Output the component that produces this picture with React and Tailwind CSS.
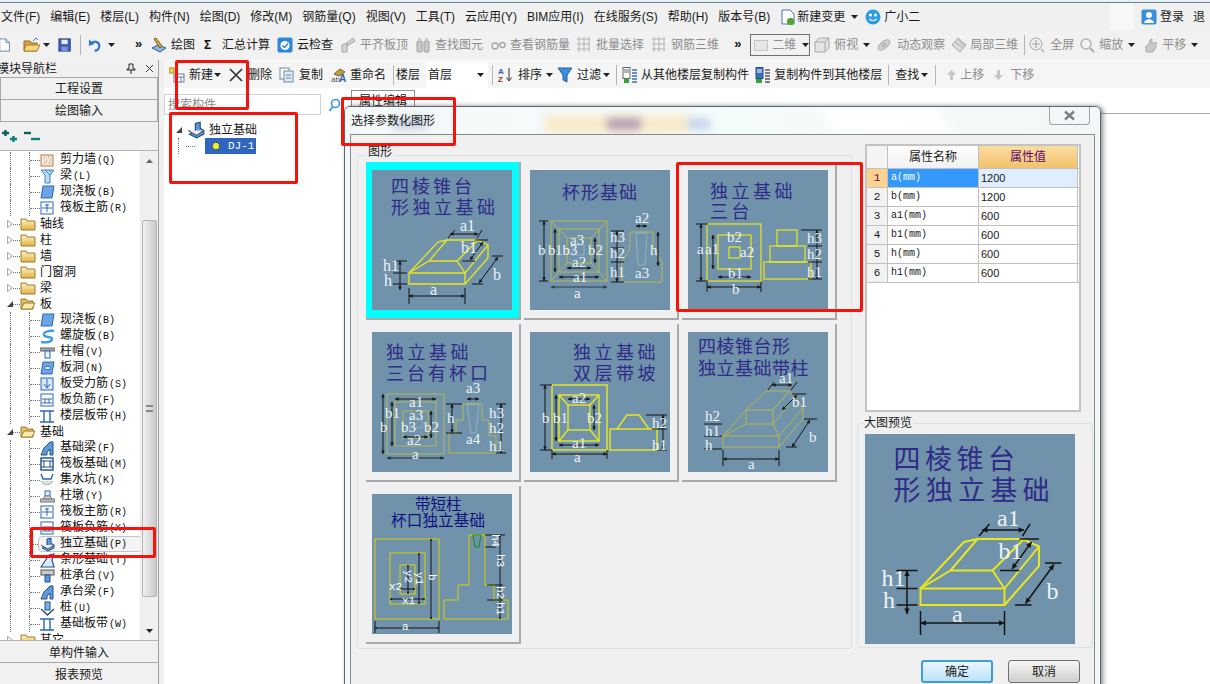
import React from "react";

const Y = "#e8e81c", O = "#b5b84e", K = "#141414", W = "#eef3f6";

function Dim({ x1, y1, x2, y2, c = K, s = 3.6 }) {
  const d = Math.hypot(x2 - x1, y2 - y1) || 1;
  const ux = (x2 - x1) / d, uy = (y2 - y1) / d, nx = -uy, ny = ux;
  const tri = (x, y, dir) => `${x},${y} ${x + dir * ux * s + nx * s * 0.5},${y + dir * uy * s + ny * s * 0.5} ${x + dir * ux * s - nx * s * 0.5},${y + dir * uy * s - ny * s * 0.5}`;
  return (
    <g>
      <line x1={x1} y1={y1} x2={x2} y2={y2} stroke={c} strokeWidth="1" />
      <polygon points={tri(x1, y1, 1)} fill={c} />
      <polygon points={tri(x2, y2, -1)} fill={c} />
    </g>
  );
}
const L = ({ p, c = K, w = 1 }) => <polyline points={p} fill="none" stroke={c} strokeWidth={w} />;
const T = ({ x, y, s = 15, children }) => (
  <text x={x} y={y} fontSize={s} fill={W} fontFamily="'Liberation Serif', serif">{children}</text>
);
const H = ({ x, y, s = 18, ls = 3, c = "#2f2b88", children }) => (
  <text x={x} y={y} fontSize={s} letterSpacing={ls} fill={c} fontFamily="'Noto Sans CJK SC', sans-serif">{children}</text>
);
const Thumb = ({ size = 140, children }) => (
  <svg viewBox="0 0 140 140" width={size} height={size} className="block shrink-0 bg-[#7092aa]">{children}</svg>
);

function D1() {
  const c = Y, w = 1.3;
  return (
    <>
      <H x={19} y={23}>四棱锥台</H>
      <H x={19} y={44} ls={3.5}>形独立基础</H>
      <L c={c} w={w} p="37,103 93,103 93,114 37,114 37,103 66,72 75,70 105,70 116,75 116,88 93,114" />
      <L c={c} w={w} p="93,103 116,75" />
      <L c={c} w={w} p="37,103 57,91 85,91 93,103" />
      <L c={c} w={w} p="57,91 75,70" />
      <L c={c} w={w} p="85,91 106,70" />
      <L p="37,118 37,134" /><L p="93,118 93,134" />
      <Dim x1={37} y1={126} x2={93} y2={126} />
      <L p="21,91 35,91" /><L p="21,103 35,103" /><L p="21,114 35,114" />
      <Dim x1={28} y1={91} x2={28} y2={120} />
      <L p="76,68 83,60" /><L p="105,68 110,60" />
      <Dim x1={78} y1={64} x2={106} y2={64} />
      <L p="103,70 116,70" /><L p="90,91 103,91" />
      <Dim x1={111} y1={72} x2={98} y2={90} />
      <L p="120,86 131,86" /><L p="100,114 111,114" />
      <Dim x1={126} y1={87} x2={107} y2={113} />
      <T x={58} y={125} s={16}>a</T>
      <T x={11} y={101} s={16}>h1</T>
      <T x={12} y={116} s={16}>h</T>
      <T x={88} y={61} s={16}>a1</T>
      <T x={89} y={83} s={16}>b1</T>
      <T x={121} y={110} s={16}>b</T>
    </>
  );
}
function D2() {
  const c = O;
  return (
    <>
      <H x={32} y={29} ls={1}>杯形基础</H>
      <rect x={21} y={51} width={56} height={60} fill="none" stroke={c} />
      <rect x={29} y={59} width={40} height={43} fill="none" stroke={c} />
      <rect x={37} y={68} width={24} height={25} fill="none" stroke={c} />
      <rect x={43} y={75} width={11} height={10} fill="none" stroke="#a9c7c9" strokeWidth="0.6" />
      <L c={c} p="21,51 37,68" /><L c={c} p="77,51 61,68" /><L c={c} p="21,111 37,93" /><L c={c} p="77,111 61,93" />
      <polygon points="100,62 123,62 123,78 132,92 132,112 92,112 92,92 100,78" fill="none" stroke={c} />
      <polygon points="106,63 117,63 115,95 108,95" fill="none" stroke="#a9c7c9" strokeWidth="0.6" />
      <Dim x1={14} y1={51} x2={14} y2={111} /><L p="9,51 18,51" /><L p="9,111 18,111" />
      <Dim x1={25} y1={59} x2={25} y2={102} />
      <Dim x1={21} y1={117} x2={77} y2={117} c="#2c3c48" />
      <Dim x1={29} y1={107} x2={69} y2={107} />
      <Dim x1={37} y1={98} x2={61} y2={98} />
      <Dim x1={65} y1={68} x2={65} y2={93} />
      <Dim x1={87} y1={61} x2={87} y2={112} /><L p="81,61 94,61" /><L p="81,78 94,78" /><L p="81,92 94,92" /><L p="81,112 94,112" />
      <Dim x1={128} y1={62} x2={128} y2={96} />
      <Dim x1={106} y1={56} x2={117} y2={56} />
      <T x={8} y={85}>b</T><T x={18} y={85}>b</T><T x={25} y={85}>1b3</T><T x={58} y={85}>b2</T>
      <T x={40} y={75}>a3</T><T x={42} y={97}>a2</T><T x={43} y={112}>a1</T><T x={44} y={128}>a</T>
      <T x={80} y={72}>h3</T><T x={80} y={88}>h2</T><T x={80} y={107}>h1</T><T x={120} y={85}>h</T>
      <T x={105} y={53}>a2</T><T x={105} y={108}>a3</T>
    </>
  );
}
function D3() {
  const c = Y;
  return (
    <>
      <H x={22} y={28} ls={3.5}>独立基础</H>
      <H x={22} y={48} ls={3.5}>三台</H>
      {[[19, 54, 54, 57], [30, 65, 33, 34], [41, 77, 11, 11], [76, 92, 47, 17], [82, 76, 35, 16], [89, 60, 20, 16]].map((r, i) => (
        <rect key={i} x={r[0]} y={r[1]} width={r[2]} height={r[3]} fill="none" stroke={c} strokeWidth="1.2" />
      ))}
      <Dim x1={13} y1={54} x2={13} y2={111} /><L p="8,54 20,54" /><L p="8,111 20,111" />
      <Dim x1={25} y1={65} x2={25} y2={99} />
      <Dim x1={30} y1={107} x2={63} y2={107} />
      <Dim x1={19} y1={117} x2={73} y2={117} /><L p="19,112 19,122" /><L p="73,112 73,122" />
      <Dim x1={129} y1={60} x2={129} y2={109} />
      <L p="113,60 134,60" /><L p="120,76 134,76" /><L p="120,92 134,92" /><L p="120,109 134,109" />
      <T x={9} y={84}>a</T><T x={17} y={84}>a1</T><T x={39} y={72}>b2</T><T x={52} y={87}>a2</T>
      <T x={40} y={108}>b1</T><T x={44} y={124}>b</T>
      <T x={119} y={73}>h3</T><T x={119} y={89}>h2</T><T x={119} y={107}>h1</T>
    </>
  );
}
function D4() {
  const c = O;
  return (
    <>
      <H x={14} y={27} ls={3.5}>独立基础</H>
      <H x={14} y={48} ls={3}>三台有杯口</H>
      {[[15, 62, 57, 60], [23, 70, 41, 44], [31, 79, 25, 27]].map((r, i) => (
        <rect key={i} x={r[0]} y={r[1]} width={r[2]} height={r[3]} fill="none" stroke={c} />
      ))}
      <rect x={38} y={86} width={12} height={10} fill="none" stroke="#a9c7c9" strokeWidth="0.6" />
      <polygon points="91,72 110,72 110,88 117,88 117,104 124,104 124,121 77,121 77,101 84,101 84,88 91,88" fill="none" stroke={c} />
      <polygon points="95,72 107,72 104,101 99,101" fill="none" stroke="#a9c7c9" strokeWidth="0.6" />
      <Dim x1={15} y1={126} x2={72} y2={126} c="#1c2a34" /><Dim x1={11} y1={62} x2={11} y2={122} />
      <Dim x1={20} y1={70} x2={20} y2={114} /><Dim x1={23} y1={67} x2={64} y2={67} />
      <Dim x1={59} y1={79} x2={59} y2={106} /><Dim x1={31} y1={105} x2={56} y2={105} />
      <Dim x1={95} y1={67} x2={107} y2={67} /><Dim x1={80} y1={72} x2={80} y2={101} />
      <L p="74,72 90,72" /><L p="74,101 90,101" />
      <Dim x1={129} y1={72} x2={129} y2={121} /><L p="124,72 134,72" /><L p="124,121 134,121" />
      <T x={8} y={100}>b</T><T x={13} y={86}>b1</T><T x={37} y={75}>a1</T><T x={37} y={88}>a3</T>
      <T x={29} y={100}>b3</T><T x={52} y={100}>b2</T><T x={35} y={113}>a2</T><T x={40} y={127}>a</T>
      <T x={94} y={61}>a3</T><T x={75} y={91}>h</T><T x={94} y={112}>a4</T>
      <T x={117} y={86}>h3</T><T x={117} y={101}>h2</T><T x={117} y={119}>h1</T>
    </>
  );
}
function D5() {
  const c = Y, w = 1.4;
  return (
    <>
      <H x={43} y={27} ls={3.5}>独立基础</H>
      <H x={43} y={48} ls={3.5}>双层带坡</H>
      {[[22, 53, 55, 65], [29, 63, 40, 46], [38, 73, 22, 25], [80, 97, 47, 21]].map((r, i) => (
        <rect key={i} x={r[0]} y={r[1]} width={r[2]} height={r[3]} fill="none" stroke={c} strokeWidth={w} />
      ))}
      <L c={c} w={w} p="29,63 38,73" /><L c={c} w={w} p="69,63 60,73" /><L c={c} w={w} p="29,109 38,98" /><L c={c} w={w} p="69,109 60,98" />
      <L c={c} w={w} p="87,97 97,83 109,83 119,97" />
      <Dim x1={22} y1={122} x2={77} y2={122} /><L p="22,118 22,127" /><L p="77,118 77,127" />
      <Dim x1={15} y1={53} x2={15} y2={118} /><L p="10,53 22,53" /><L p="10,118 22,118" />
      <Dim x1={26} y1={63} x2={26} y2={109} /><Dim x1={38} y1={67} x2={60} y2={67} />
      <Dim x1={64} y1={73} x2={64} y2={98} /><Dim x1={29} y1={113} x2={69} y2={113} />
      <Dim x1={133} y1={83} x2={133} y2={118} /><L p="116,83 137,83" /><L p="122,97 137,97" /><L p="127,118 137,118" />
      <T x={44} y={130}>a</T><T x={12} y={91}>b</T><T x={23} y={91}>b1</T><T x={42} y={71}>a2</T>
      <T x={57} y={91}>b2</T><T x={42} y={116}>a1</T><T x={122} y={96}>h2</T><T x={122} y={118}>h1</T>
    </>
  );
}
function D6() {
  const c = O;
  return (
    <>
      <H x={10} y={21} ls={0.5}>四棱锥台形</H>
      <H x={10} y={43} ls={0.5}>独立基础带柱</H>
      <rect x={35} y={104} width={56} height={11} fill="none" stroke={c} />
      <rect x={58} y={78} width={27} height={14} fill="none" stroke={c} />
      <L c={c} p="91,115 115,87 115,76 91,104" />
      <L c={c} p="35,104 58,92" /><L c={c} p="85,92 91,104" />
      <L c={c} p="35,104 58,78 78,59 101,59 85,78" />
      <L c={c} p="101,59 115,76" /><L c={c} p="85,92 101,72" />
      <Dim x1={35} y1={127} x2={91} y2={127} /><L p="35,118 35,134" /><L p="91,118 91,134" />
      <Dim x1={122} y1={88} x2={104} y2={115} /><L p="116,87 129,87" /><L p="98,115 109,115" />
      <Dim x1={84} y1={53} x2={104} y2={53} /><L p="80,58 86,50" /><L p="103,58 109,50" />
      <Dim x1={109} y1={63} x2={94} y2={78} /><L p="104,62 118,62" />
      <L p="16,92 34,92" /><L p="16,104 34,104" /><L p="16,117 34,117" />
      <T x={17} y={89}>h2</T><T x={17} y={104}>h1</T><T x={17} y={118}>h</T>
      <T x={60} y={137}>a</T><T x={121} y={110}>b</T><T x={91} y={51}>a1</T><T x={104} y={75}>b1</T>
    </>
  );
}
function D7() {
  const c = "#d8d000";
  const R = ({ x, y, children }) => (
    <text x={x} y={y} fontSize={11} fill="#fff" fontFamily="'Liberation Mono', monospace" transform={`rotate(90 ${x} ${y})`}>{children}</text>
  );
  return (
    <>
      <H x={43} y={16} s={15.5} ls={0} c="#10107f">带短柱</H>
      <H x={19} y={32} s={15.5} ls={0.2} c="#10107f">杯口独立基础</H>
      {[[3, 45, 64, 80], [18, 59, 35, 51], [28, 71, 15, 29]].map((r, i) => (
        <rect key={i} x={r[0]} y={r[1]} width={r[2]} height={r[3]} fill="none" stroke={c} />
      ))}
      <polygon points="97,41 113,41 113,91 122,91 122,106 136,106 136,125 72,125 72,106 86,106 86,91 97,91" fill="none" stroke={c} />
      <polygon points="101,41 109,41 107,53 103,53" fill="none" stroke="#0b8f10" />
      <Dim x1={3} y1={134} x2={67} y2={134} s={2} /><L p="3,127 3,139" /><L p="67,127 67,139" />
      <Dim x1={59} y1={45} x2={59} y2={125} s={2} />
      <Dim x1={47} y1={59} x2={47} y2={110} s={2} />
      <Dim x1={36} y1={71} x2={36} y2={100} s={2} />
      <Dim x1={18} y1={105} x2={53} y2={105} s={2} />
      <Dim x1={28} y1={95} x2={43} y2={95} s={2} />
      <Dim x1={128} y1={41} x2={128} y2={125} s={2} />
      <L p="113,41 133,41" /><L p="113,53 124,53" /><L p="115,91 131,91" /><L p="115,106 131,106" />
      <text x={30} y={136} fontSize={11} fill="#fff" fontFamily="'Liberation Mono', monospace">a</text>
      <text x={17} y={96} fontSize={11} fill="#fff" fontFamily="'Liberation Mono', monospace">x2</text>
      <text x={30} y={110} fontSize={11} fill="#fff" fontFamily="'Liberation Mono', monospace">x1</text>
      <R x={57} y={80}>b</R><R x={44} y={78}>y1</R><R x={33} y={76}>y2</R>
      <R x={120} y={40}>h4</R><R x={125} y={60}>h3</R><R x={125} y={92}>h2</R><R x={125} y={108}>h1</R>
    </>
  );
}

const S = ({ w = 16, h = 16, v = "0 0 16 16", children }) => (
  <svg width={w} height={h} viewBox={v} className="block shrink-0">{children}</svg>
);
const Caret = () => (
  <svg width="7" height="4" viewBox="0 0 7 4" className="block shrink-0"><polygon points="0,0 7,0 3.5,4" fill="#222" /></svg>
);
const Sep = () => <div className="h-5 w-px shrink-0 bg-[#b5b5b5]" />;
const More = () => <div className="-mt-1 w-2 shrink-0 text-[13px] leading-none font-bold text-[#111]">»</div>;
const IDoc = () => <S w={14}><path d="M2 1h7l4 4v10H2z" fill="#fff" stroke="#5a7da0" /><path d="M9 1v4h4" fill="#dbe7f3" stroke="#5a7da0" /></S>;
const IFold = () => <S w={18}><path d="M1 4h6l1 2h6v8H1z" fill="#d9a13a" stroke="#8f6a20" /><path d="M3 8h14l-3 6H1z" fill="#f6d77f" stroke="#a8802c" /><path d="M10 4l3-3 2 2" fill="none" stroke="#3a79c9" /></S>;
const ISave = () => <S w={14}><rect x="1" y="1" width="13" height="14" fill="#3f5fb5" stroke="#263f86" /><rect x="4" y="2" width="7" height="5" fill="#e9eefb" /><rect x="4" y="10" width="7" height="5" fill="#7b93d5" /></S>;
const IUndo = () => <S w={15}><path d="M3 7c3-4 9-3 9 2 0 3-2 5-5 5" fill="none" stroke="#2f78d0" strokeWidth="2.4" /><polygon points="1,2 7,7 1,9" fill="#2f78d0" /></S>;
const IDraw = () => <S><path d="M1 11l6-3 8 3-6 4z" fill="#8fb7df" stroke="#2c5b94" /><path d="M3 2l2-1 6 8-2 2z" fill="#e2b13c" stroke="#74581a" /></S>;
const ICloud = () => <S><rect x="0.5" y="0.5" width="15" height="15" rx="2" fill="#2e86d8" /><circle cx="8" cy="8.5" r="4.6" fill="#fff" /><path d="M5.5 8.5l2 2 3.5-4" fill="none" stroke="#2e86d8" strokeWidth="1.4" /></S>;
const IG1 = () => <S><path d="M2 15V8l5-2v9zM7 6l6-5 2 3-8 5z" fill="#d5d5d5" stroke="#a5a5a5" /></S>;
const IBino = () => <S><rect x="2" y="4" width="5" height="11" rx="1" fill="#c9c9c9" stroke="#a0a0a0" /><rect x="9" y="4" width="5" height="11" rx="1" fill="#c9c9c9" stroke="#a0a0a0" /><rect x="3" y="1" width="3" height="3" fill="#ccc" /><rect x="10" y="1" width="3" height="3" fill="#ccc" /></S>;
const IGlass = () => <S><circle cx="4" cy="9" r="3" fill="none" stroke="#a8a8a8" strokeWidth="1.4" /><path d="M7 9c1-2 2-4 3-3" fill="none" stroke="#a8a8a8" /><circle cx="11.5" cy="8" r="2.5" fill="none" stroke="#a8a8a8" strokeWidth="1.4" /></S>;
const IGrid = () => <S><path d="M1 2h13M1 7h13M1 12h13M3 0v15M8 0v15M13 0v15" stroke="#b4b4b4" fill="none" /></S>;
const IBox = () => <S><path d="M1 5l4-4h10v10l-4 4H1z" fill="#e3e3e3" stroke="#a8a8a8" /><path d="M1 5h10v10M11 5l4-4" fill="none" stroke="#a8a8a8" /></S>;
const IOrbit = () => <S w={16} h={16} v="0 0 18 18"><ellipse cx="9" cy="9" rx="8" ry="4" transform="rotate(-40 9 9)" fill="#d0d0d0" stroke="#aaa" /><circle cx="9" cy="9" r="3" fill="#bdbdbd" /></S>;
const ILocal = () => <S><path d="M1 8l6-7 8 7-6 7z" fill="#dcdcdc" stroke="#a8a8a8" /><path d="M4 5l8 6M7 3l7 6" stroke="#aaa" fill="none" /></S>;
const IZoomFit = () => <S><circle cx="7" cy="7" r="6" fill="#efefef" stroke="#a8a8a8" /><path d="M7 3v8M3 7h8M12 12l3 3" stroke="#a8a8a8" fill="none" strokeWidth="1.2" /></S>;
const IZoom = () => <S><circle cx="6" cy="7" r="5" fill="#f3f3f3" stroke="#b0b0b0" strokeWidth="1.4" /><path d="M10 11l4 4" stroke="#aaa" strokeWidth="2" /></S>;
const IHand = () => <S><path d="M3 15V9l3-2 1-4 2-1v5l4-2v5l-3 5z" fill="#c9c9c9" stroke="#aaa" /></S>;
const INew = () => <S><rect x="0" y="1" width="5" height="5" fill="#f3cf4e" stroke="#b08a20" /><rect x="5" y="7" width="10" height="8" fill="#fff" stroke="#5d7fa5" /><path d="M5 10h10M8 10v5M12 10v5" stroke="#5d7fa5" fill="none" /></S>;
const ICopy = () => <S><rect x="1" y="1" width="9" height="11" fill="#fff" stroke="#6d89a8" /><rect x="5" y="4" width="9" height="11" fill="#dfe9f4" stroke="#6d89a8" /><path d="M7 8h5M7 11h5" stroke="#6d89a8" /></S>;
const IRename = () => <S><path d="M3 7l6-5 5 3-6 4z" fill="#c9a23a" stroke="#75601c" /><text x="0" y="15" fontSize="8" fill="#555" fontFamily="'Liberation Sans', sans-serif">ab</text><text x="8" y="15" fontSize="10" fontWeight="700" fill="#2a62b0" fontFamily="'Liberation Sans', sans-serif">A</text></S>;
const ISort = () => <S><text x="1" y="7" fontSize="8" fontWeight="700" fill="#2a62b0" fontFamily="'Liberation Sans', sans-serif">A</text><text x="1" y="15" fontSize="8" fontWeight="700" fill="#a03030" fontFamily="'Liberation Sans', sans-serif">Z</text><path d="M12 1v12M9.5 10.5l2.5 3.5 2.5-3.5" stroke="#333" fill="none" /></S>;
const IFunnel = () => <S><polygon points="1,1 15,1 10,8 10,15 6,13 6,8" fill="#3d8fe0" stroke="#235f9f" /></S>;
const ICopyFrom = () => <S><rect x="1" y="0.5" width="7" height="11" fill="#fff" stroke="#666" /><path d="M2 3h5M2 5h5" stroke="#666" /><rect x="2" y="12" width="5" height="4" fill="#35a336" /><path d="M10 3h5M10 6h5M10 9h5M10 12h5M10 15h5" stroke="#3a70b8" strokeWidth="1.4" /></S>;
const ICopyTo = () => <S><rect x="1" y="0.5" width="7" height="11" fill="#3a70b8" stroke="#2a4f86" /><path d="M2 3h5M2 5h5" stroke="#fff" /><rect x="1" y="12" width="6" height="4" fill="#35a336" /><path d="M10 3h5M10 6h5M10 9h5M10 12h5M10 15h5" stroke="#555" strokeWidth="1.4" /></S>;
const IUp = () => <S w={9} h={12} v="0 0 9 12"><polygon points="4.5,1 9,6 6,6 6,11 3,11 3,6 0,6" fill="#c6c6c6" /></S>;
const IDown = () => <S w={9} h={12} v="0 0 9 12"><polygon points="4.5,11 9,6 6,6 6,1 3,1 3,6 0,6" fill="#c6c6c6" /></S>;

const Blue = "#2a66b8";
const TI = {
  wall: <><rect x="1" y="2" width="12" height="11" fill="#f2e4d6" stroke="#c9743a" /><path d="M4 5h1M8 4h1M6 8h1M10 7h1M4 10h1M9 10h1" stroke="#888" /></>,
  beamL: <><path d="M1 1h13l-4 5v8H5V6z" fill="#bcdcf4" stroke="#3a82c4" /><path d="M5 1l5 5M9 1l3 3" stroke="#3a82c4" /></>,
  slab: <path d="M3 1h11l-2 12H1z" fill="#6aa4e4" stroke={Blue} />,
  net: <><rect x="1" y="1" width="12" height="12" fill="#fff" stroke={Blue} /><path d="M2 7h10M7 3v8M5 4h4" stroke={Blue} /></>,
  netC: <><rect x="1" y="1" width="12" height="12" fill="#d8e7f8" stroke={Blue} /><path d="M7 2v9M4 7l3 4 3-4" stroke={Blue} fill="none" /></>,
  grid: <><rect x="1" y="1" width="12" height="12" fill="#fff" stroke={Blue} /><path d="M2 6h10M2 10h10M5 6v4M9 6v4" stroke={Blue} /></>,
  spiral: <path d="M14 2C9 1 3 3 4 6c1 3 8 1 8 4s-6 4-11 3" fill="none" stroke="#3f9ce0" strokeWidth="2.4" />,
  cap: <><rect x="0" y="3" width="15" height="3" fill="#a8a8a8" stroke="#666" /><rect x="5" y="6" width="5" height="7" fill="#e8f0fa" stroke={Blue} /></>,
  hole: <><path d="M3 1h11l-2 12H1z" fill="#6aa4e4" stroke={Blue} /><ellipse cx="7.5" cy="7" rx="3" ry="1.6" fill="#fff" stroke={Blue} /></>,
  band: <><path d="M0 2h14M0 13h14M4 2v11M10 2v11" stroke={Blue} strokeWidth="1.4" /></>,
  beam: <><path d="M1 14l3-7 6-6h3v13h-3V8l-3 3v3z" fill="#5f9bd9" stroke="#234f8a" /></>,
  raft: <><rect x="1" y="1" width="12" height="12" fill="#fff" stroke="#1d4d8f" strokeWidth="1.4" /><rect x="4" y="4" width="6" height="6" fill="none" stroke="#1d4d8f" /><path d="M1 4h3M10 4h3M1 10h3M10 10h3" stroke="#1d4d8f" /></>,
  pit: <><path d="M1 1l2 5h8l2-5" fill="none" stroke={Blue} strokeWidth="1.4" /><path d="M1 8c2 5 10 5 12 0" fill="#ddd" stroke="#777" strokeDasharray="1 1" /></>,
  pier: <><rect x="5" y="2" width="5" height="5" fill="#e8f0fa" stroke={Blue} /><path d="M3 10l2-3h5l2 3z" fill="#ddd" stroke="#777" /><rect x="0" y="10" width="15" height="3" fill="#bbb" stroke="#777" /></>,
  foot: <><path d="M2 11l5-3 0-6 4-1v5l3 2v3l-6 3z" fill="#5f9bd9" stroke="#234f8a" /><path d="M1 8l7 4 6-4" fill="#eee" stroke="#555" /></>,
  strip: <><path d="M1 14l4-6 4-6 5-1-2 6 2 7z" fill="#dbe9f8" stroke="#234f8a" strokeWidth="1.2" /></>,
  pcap: <><rect x="1" y="1" width="13" height="5" fill="#c9c9c9" stroke="#555" /><path d="M5 6h5v7H5z" fill="#5f9bd9" stroke="#234f8a" /></>,
  pile: <><rect x="5" y="1" width="5" height="8" fill="#7fb0e4" stroke="#234f8a" /><path d="M1 8l6.5 6L14 8" fill="none" stroke="#234f8a" strokeWidth="1.4" /></>,
};
const TreeIcon = ({ k, size = 15 }) => <S w={size} h={size} v="0 0 15 15">{TI[k]}</S>;
const FolderI = ({ open }) => (
  <S w={16} h={14} v="0 0 16 14">
    {open
      ? <><path d="M1 2h5l1 2h6v8H1z" fill="#e8bf61" stroke="#9a7a30" /><path d="M4 6h11l-3 6H1z" fill="#fbeab0" stroke="#9a7a30" /></>
      : <><path d="M1 2h5l1 2h8v9H1z" fill="url(#fg)" stroke="#9a7a30" /><defs><linearGradient id="fg" x1="0" y1="0" x2="0" y2="1"><stop offset="0" stopColor="#fdf0bc" /><stop offset="1" stopColor="#e4b248" /></linearGradient></defs></>}
  </S>
);

const Leaf = ({ icon, t, k, sel }) => (
  <div className="flex h-4 items-center">
    <div className="ml-[10px] h-4 w-[19px] shrink-0 border-l border-dotted border-[#777]" />
    <div className={"flex h-4 shrink-0 items-center border-l border-dotted border-[#777] " + (sel ? "w-[9px]" : "w-[11px]")}><div className="w-full border-t border-dotted border-[#777]" /></div>
    <div className={"flex h-4 shrink-0 items-center " + (sel ? "rounded-[4px] border border-[#c4c4c4] bg-[#f4f4f4] pr-[14px] pl-px" : "")}>
      <TreeIcon k={icon} />
      <span className="ml-[5px] whitespace-nowrap text-[12px] leading-4 text-[#111]">
        {t}<span className="ml-px [font-family:'Liberation_Mono',monospace] text-[10px]">({k})</span>
      </span>
    </div>
  </div>
);
const Branch = ({ t, open }) => (
  <div className="flex h-4 items-center">
    <div className="ml-[7px] w-[6px] shrink-0">
      {open
        ? <svg width="6" height="6" viewBox="0 0 6 6" className="block"><polygon points="6,0 6,6 0,6" fill="#444" /></svg>
        : <svg width="6" height="8" viewBox="0 0 6 8" className="block"><polygon points="0.5,0.5 5.5,4 0.5,7.5" fill="#fff" stroke="#a8a8a8" /></svg>}
    </div>
    <div className="w-[7px] shrink-0 border-t border-dotted border-[#777]" />
    <FolderI open={open} />
    <span className="ml-[4px] text-[12px] leading-4 text-[#111]">{t}</span>
  </div>
);

const Red = ({ className }) => <div className={"pointer-events-none absolute rounded-[2px] border-[3px] border-[#f5140c] " + className} />;

const Card = ({ cyan, children }) => (
  <div className={"h-[158px] w-[155px] border-r-2 border-b-2 border-r-[#a9a9a9] border-b-[#a9a9a9] pt-2 pl-[6px] " + (cyan ? "bg-[#00ffff]" : "bg-[#f0f0f0]")}>
    <Thumb>{children}</Thumb>
  </div>
);

const rows = [["a(mm)", "1200"], ["b(mm)", "1200"], ["a1(mm)", "600"], ["b1(mm)", "600"], ["h(mm)", "600"], ["h1(mm)", "600"]];
const Gray = ({ className = "", children }) => <span className={"shrink-0 whitespace-nowrap text-[#8d8d8d] " + className}>{children}</span>;
const Txt = ({ className = "", children }) => <span className={"shrink-0 whitespace-nowrap text-[#1a1a1a] " + className}>{children}</span>;
const B = ({ className, children }) => <div className={"shrink-0 " + className}>{children}</div>;

const menus = ["文件(F)", "编辑(E)", "楼层(L)", "构件(N)", "绘图(D)", "修改(M)", "钢筋量(Q)", "视图(V)", "工具(T)", "云应用(Y)", "BIM应用(I)", "在线服务(S)", "帮助(H)", "版本号(B)"];

export default function App() {
  return (
    <div className="relative flex h-[684px] w-[1210px] flex-col overflow-hidden bg-white [font-family:'Liberation_Sans','Noto_Sans_CJK_SC',sans-serif] text-[12px] leading-4 text-[#1a1a1a]">
      <div className="h-[3px] shrink-0 border-b border-[#6f7f8c] bg-[#e4f2f6]" />
      {/* menu */}
      <div className="flex h-[27px] shrink-0 items-center bg-[#f0f0f0] pl-px">
        <div className="flex gap-[10px]">{menus.map((m) => <span key={m} className="whitespace-nowrap">{m}</span>)}</div>
        <B className="ml-[10px]"><S><path d="M2 1h8l4 4v10H2z" fill="#fff" stroke="#3d7fc4" /><rect x="7" y="9" width="7" height="7" rx="3" fill="#56a32f" /></S></B>
        <Txt className="ml-[1px]">新建变更</Txt>
        <B className="ml-[6px]"><Caret /></B>
        <B className="ml-[6px]"><S w={17}><circle cx="8.5" cy="8" r="7.5" fill="#2a9be8" /><circle cx="6" cy="6" r="1.6" fill="#fff" /><circle cx="11" cy="6" r="1.6" fill="#fff" /><path d="M5 10c2 2 5 2 7 0" fill="none" stroke="#fff" strokeWidth="1.2" /></S></B>
        <Txt className="ml-[3px]">广小二</Txt>
        <div className="ml-auto flex items-center">
          <div className="mr-[7px] h-[27px] w-6 bg-[#f7f7f7]" />
          <S><rect x="0.5" y="0.5" width="15" height="15" rx="2" fill="#3a8fdc" /><circle cx="8" cy="6" r="3" fill="#fff" /><path d="M3 14c1-5 9-5 10 0z" fill="#fff" /></S>
          <Txt className="ml-[3px]">登录</Txt>
          <Txt className="ml-[9px] w-[17px] overflow-hidden">退</Txt>
        </div>
      </div>
      {/* toolbar 1 */}
      <div className="flex h-[30px] shrink-0 items-center bg-[#f1f1f1]">
        <B className="-ml-[2px]"><IDoc /></B>
        <B className="ml-[10px]"><IFold /></B>
        <B className="ml-[3px]"><Caret /></B>
        <B className="ml-2"><ISave /></B>
        <B className="ml-2"><Sep /></B>
        <B className="ml-[7px]"><IUndo /></B>
        <B className="ml-[5px]"><Caret /></B>
        <B className="ml-[20px]"><More /></B>
        <B className="ml-2"><IDraw /></B>
        <Txt className="ml-1">绘图</Txt>
        <span className="ml-[9px] w-[10px] shrink-0 font-bold text-[#111]">Σ</span>
        <Txt className="ml-2">汇总计算</Txt>
        <B className="ml-[7px]"><ICloud /></B>
        <Txt className="ml-1">云检查</Txt>
        <B className="ml-[7px]"><IG1 /></B>
        <Gray className="ml-1">平齐板顶</Gray>
        <B className="ml-[7px]"><IBino /></B>
        <Gray className="ml-1">查找图元</Gray>
        <B className="ml-2"><IGlass /></B>
        <Gray className="ml-[3px]">查看钢筋量</Gray>
        <B className="ml-[6px]"><IGrid /></B>
        <Gray className="ml-1">批量选择</Gray>
        <B className="ml-[7px]"><IGrid /></B>
        <Gray className="ml-1">钢筋三维</Gray>
        <B className="ml-[15px]"><More /></B>
        <div className="ml-2 flex h-[22px] w-[60px] shrink-0 items-center border border-[#707070] pl-[3px]">
          <div className="h-[11px] w-[14px] border border-[#c4c4c4] bg-[#e6e6e6]" />
          <Gray className="ml-1 w-[26px]">二维</Gray>
          <B className="ml-1"><Caret /></B>
        </div>
        <B className="ml-1"><IBox /></B>
        <Gray className="ml-1">俯视</Gray>
        <B className="ml-[5px]"><Caret /></B>
        <B className="ml-[6px]"><IOrbit /></B>
        <Gray className="ml-[5px]">动态观察</Gray>
        <B className="ml-[6px]"><ILocal /></B>
        <Gray className="ml-[3px]">局部三维</Gray>
        <B className="ml-[6px]"><Sep /></B>
        <B className="ml-1"><IZoomFit /></B>
        <Gray className="ml-[5px]">全屏</Gray>
        <B className="ml-[6px]"><IZoom /></B>
        <Gray className="ml-[3px]">缩放</Gray>
        <B className="ml-[5px]"><Caret /></B>
        <B className="ml-2"><IHand /></B>
        <Gray className="ml-[3px]">平移</Gray>
        <B className="ml-[5px]"><Caret /></B>
      </div>
      <div className="flex min-h-0 flex-1">
        {/* left nav */}
        <div className="flex w-[159px] shrink-0 flex-col border-r border-[#a0a0a0] bg-[#f0f0f0]">
          <div className="flex h-[17px] shrink-0 items-center">
            <span className="-ml-[3px] whitespace-nowrap">模块导航栏</span>
            <span className="ml-auto"><S w={10} h={11} v="0 0 10 11"><path d="M3 1h4v5h2v1H1V6h2zM5 7v4" fill="none" stroke="#222" /></S></span>
            <span className="mr-[4px] ml-[9px]"><S w={9} h={9} v="0 0 9 9"><path d="M1 1l7 7M8 1l-7 7" stroke="#444" /></S></span>
          </div>
          <div className="flex h-[23px] shrink-0 items-center justify-center border border-[#a8a8a8] bg-[#f1f1f1] pt-px">工程设置</div>
          <div className="-mt-px flex h-[23px] shrink-0 items-center justify-center border border-[#a8a8a8] bg-[#f1f1f1] pt-px">绘图输入</div>
          <div className="flex h-[28px] shrink-0 items-center gap-[6px] pl-[2px]">
            <S w={16} h={14} v="0 0 16 14"><path d="M0 4h7M3.5 1v6" stroke="#0d5f5f" strokeWidth="2.4" /><path d="M8 10h7M11.5 7v6" stroke="#0d7f7f" strokeWidth="2.4" /></S>
            <S w={16} h={14} v="0 0 16 14"><path d="M0 4h7" stroke="#0d5f5f" strokeWidth="2.4" /><path d="M7 10h9" stroke="#0d7f7f" strokeWidth="2.4" /></S>
          </div>
          <div className="flex h-[491px] shrink-0 overflow-hidden border-y border-[#b5b5b5] bg-white">
            <div className="min-w-0 flex-1 overflow-hidden pt-px">
              <Leaf icon="wall" t="剪力墙" k="Q" />
              <Leaf icon="beamL" t="梁" k="L" />
              <Leaf icon="slab" t="现浇板" k="B" />
              <Leaf icon="net" t="筏板主筋" k="R" />
              <Branch t="轴线" /><Branch t="柱" /><Branch t="墙" /><Branch t="门窗洞" /><Branch t="梁" />
              <Branch t="板" open />
              <Leaf icon="slab" t="现浇板" k="B" />
              <Leaf icon="spiral" t="螺旋板" k="B" />
              <Leaf icon="cap" t="柱帽" k="V" />
              <Leaf icon="hole" t="板洞" k="N" />
              <Leaf icon="netC" t="板受力筋" k="S" />
              <Leaf icon="grid" t="板负筋" k="F" />
              <Leaf icon="band" t="楼层板带" k="H" />
              <Branch t="基础" open />
              <Leaf icon="beam" t="基础梁" k="F" />
              <Leaf icon="raft" t="筏板基础" k="M" />
              <Leaf icon="pit" t="集水坑" k="K" />
              <Leaf icon="pier" t="柱墩" k="Y" />
              <Leaf icon="net" t="筏板主筋" k="R" />
              <Leaf icon="grid" t="筏板负筋" k="X" />
              <Leaf icon="foot" t="独立基础" k="P" sel />
              <Leaf icon="strip" t="条形基础" k="T" />
              <Leaf icon="pcap" t="桩承台" k="V" />
              <Leaf icon="beam" t="承台梁" k="F" />
              <Leaf icon="pile" t="桩" k="U" />
              <Leaf icon="band" t="基础板带" k="W" />
              <Branch t="其它" />
            </div>
            <div className="flex w-[18px] shrink-0 flex-col items-center border-l border-[#ededed] bg-[#f0f0f0]">
              <div className="flex h-[19px] shrink-0 items-center"><svg width="7" height="4" viewBox="0 0 7 4"><polygon points="0,4 7,4 3.5,0" fill="#666" /></svg></div>
              <div className="mt-[50px] flex h-[377px] w-[15px] shrink-0 items-center justify-center rounded-[2px] border border-[#b5b5b5] bg-gradient-to-r from-[#f0f0f0] to-[#c9c9c9]">
                <div className="h-[7px] w-[7px] border-y-2 border-[#888]" />
              </div>
              <div className="mt-auto flex h-[19px] shrink-0 items-center"><Caret /></div>
            </div>
          </div>
          <div className="flex h-[22px] shrink-0 items-center justify-center border-b border-[#a8a8a8] bg-[#f1f1f1] pt-[2px]">单构件输入</div>
          <div className="flex h-[21px] shrink-0 items-center justify-center bg-[#f1f1f1] pt-[2px]">报表预览</div>
        </div>
        <div className="w-[5px] shrink-0 bg-[#f0f0f0]" />
        {/* main */}
        <div className="flex min-w-0 flex-1 flex-col">
          <div className="mt-px flex h-[27px] shrink-0 items-center bg-[#f5f5f5]">
            <B className="ml-[5px]"><INew /></B>
            <Txt className="ml-1">新建</Txt>
            <B className="ml-px"><Caret /></B>
            <B className="ml-2"><S w={14} h={14} v="0 0 14 14"><path d="M1 1l12 12M13 1L1 13" stroke="#333" strokeWidth="1.7" /></S></B>
            <Txt className="ml-[5px]">删除</Txt>
            <B className="ml-[7px]"><ICopy /></B>
            <Txt className="ml-1">复制</Txt>
            <B className="ml-2"><IRename /></B>
            <Txt className="ml-[3px]">重命名</Txt>
            <B className="ml-[7px]"><Sep /></B>
            <Txt className="ml-[2px]">楼层</Txt>
            <div className="ml-[6px] flex h-[26px] w-[62px] shrink-0 items-center bg-white pl-[2px]">首层<span className="ml-auto mr-[4px]"><Caret /></span></div>
            <B className="ml-1"><Sep /></B>
            <B className="ml-1"><ISort /></B>
            <Txt className="ml-[5px]">排序</Txt>
            <B className="ml-1"><Caret /></B>
            <B className="ml-1"><IFunnel /></B>
            <Txt className="ml-1">过滤</Txt>
            <B className="ml-[2px]"><Caret /></B>
            <B className="ml-[6px]"><Sep /></B>
            <B className="ml-[5px]"><ICopyFrom /></B>
            <Txt className="ml-[3px]">从其他楼层复制构件</Txt>
            <B className="ml-[6px]"><ICopyTo /></B>
            <Txt className="ml-[3px]">复制构件到其他楼层</Txt>
            <B className="ml-[6px]"><Sep /></B>
            <Txt className="ml-[6px]">查找</Txt>
            <B className="ml-[2px]"><Caret /></B>
            <B className="ml-[7px]"><Sep /></B>
            <B className="ml-[11px]"><IUp /></B>
            <Gray className="ml-1">上移</Gray>
            <B className="ml-[10px]"><IDown /></B>
            <Gray className="ml-[7px]">下移</Gray>
          </div>
          <div className="flex min-h-0 flex-1">
            <div className="w-[180px] shrink-0">
              <div className="mt-[6px] flex items-center">
                <div className="flex h-[21px] w-[157px] shrink-0 items-center border border-[#d2d2d2] pl-[3px] text-[#8a8a8a]">搜索构件...</div>
                <span className="ml-[8px]"><S w={12} h={14} v="0 0 12 14"><circle cx="6.5" cy="5.5" r="4" fill="none" stroke="#3c96dc" strokeWidth="1.6" /><path d="M3.5 9l-3 4" stroke="#3c96dc" strokeWidth="1.8" /></S></span>
              </div>
              <div className="mt-[7px] flex h-4 items-center pl-[12px]">
                <svg width="6" height="6" viewBox="0 0 6 6" className="block"><polygon points="6,0 6,6 0,6" fill="#444" /></svg>
                <span className="ml-[5px]"><TreeIcon k="foot" size={18} /></span>
                <span className="ml-[4px]">独立基础</span>
              </div>
              <div className="flex h-4 items-center">
                <div className="ml-[14px] h-4 w-[8px] border-l border-dotted border-[#777]" />
                <div className="w-[9px] border-t border-dotted border-[#777]" />
                <div className="ml-[10px] flex h-4 items-center bg-[#2f66c0] pr-[2px] pl-[5px] text-white">
                  <S w={12} h={12} v="0 0 12 12"><circle cx="6" cy="6" r="3.5" fill="#f7ec30" stroke="#111" strokeDasharray="1 1" /></S>
                  <span className="ml-[6px] [font-family:'Liberation_Mono',monospace] text-[11px]">DJ-1</span>
                </div>
              </div>
            </div>
            <div className="min-w-0 flex-1">
              <div className="ml-[7px] mt-[2px] flex h-[20px] w-[64px] items-center justify-center border border-b-0 border-[#909090]">属性编辑</div>
              <div className="ml-[7px] mt-[3px] border-t border-[#a8a8a8]" />
            </div>
          </div>
        </div>
      </div>

      {/* dialog */}
      <div className="absolute top-[106px] left-[344px] h-[600px] w-[757px] overflow-hidden rounded-t-[6px] border border-[#5d666e] bg-[#f3f8f9] shadow-[2px_0_5px_rgba(0,0,0,0.45)]">
        <div className="relative flex h-[27px] items-center overflow-hidden bg-gradient-to-r from-[#f5f8f8] via-[#f4fbfb] to-[#f3f7f8] pl-[6px]">
          <div className="absolute top-[10px] left-[48px] h-[12px] w-[34px] bg-[#c4d0de] blur-[4px]" />
          <div className="absolute top-[8px] left-[200px] h-[18px] w-[145px] bg-[#f8ecca] blur-[4px]" />
          <div className="absolute top-[12px] left-[262px] h-[10px] w-[34px] bg-[#a892b2] blur-[4px]" />
          <div className="absolute top-[12px] left-[343px] h-[10px] w-[22px] bg-[#bdcfe8] blur-[4px]" />
          <div className="absolute top-0 left-[480px] h-[27px] w-[120px] skew-x-[30deg] bg-white blur-[6px]" />
          <span className="relative">选择参数化图形</span>
          <div className="absolute top-[-1px] right-[10px] flex h-[19px] w-[41px] items-center justify-center rounded-b-[4px] border border-t-0 border-[#9aa1a8] bg-[#f4f6f7]">
            <S w={13} h={11} v="0 0 13 11"><path d="M2 1.5l9 8M11 1.5l-9 8" stroke="#7a7f84" strokeWidth="2.4" /></S>
          </div>
        </div>
        <div className="mx-[5px] flex h-[560px] border border-[#8a8a8a] bg-[#f0f0f0]">
          <div className="relative mt-[20px] ml-[6px] h-[494px] w-[495px] shrink-0 rounded-[3px] border border-[#dbe2e8] pt-[6px] pl-2">
            <span className="absolute top-[-12px] left-[9px] bg-[#f0f0f0] px-px">图形</span>
            <div className="grid w-[480px] grid-cols-[155px_155px_155px] gap-x-[3px] gap-y-1">
              <Card cyan><D1 /></Card>
              <Card><D2 /></Card>
              <Card><D3 /></Card>
              <Card><D4 /></Card>
              <Card><D5 /></Card>
              <Card><D6 /></Card>
              <Card><D7 /></Card>
            </div>
          </div>
          <div className="ml-[5px] min-w-0 flex-1">
            <div className="mt-[9px] ml-[8px] h-[268px] w-[216px] border-2 border-[#c3c3c3] bg-white">
              <div className="flex h-[23px] border-b border-[#c0c0c0]">
                <div className="w-[21px] shrink-0 border-r border-[#c0c0c0] bg-[#f4f4f4]" />
                <div className="flex w-[91px] shrink-0 items-center justify-center border-r border-[#c0c0c0] bg-gradient-to-b from-white to-[#f1f1f1]">属性名称</div>
                <div className="flex w-[99px] shrink-0 items-center justify-center border-r border-[#c0c0c0] bg-gradient-to-b from-[#fbdc9f] to-[#f2c26c] text-[#5c0a6e]">属性值</div>
              </div>
              {rows.map((r, i) => (
                <div key={r[0]} className="flex h-[19px] border-b border-[#c0c0c0] text-[11px]">
                  <div className={"flex w-[21px] shrink-0 items-center justify-center border-r border-[#c0c0c0] [font-family:'Liberation_Mono',monospace] " + (i === 0 ? "bg-[#fbd38d] text-[#5c0a6e]" : "bg-[#f2f2f2]")}>{i + 1}</div>
                  <div className={"flex w-[91px] shrink-0 items-center border-r border-[#c0c0c0] pl-[3px] [font-family:'Liberation_Mono',monospace] text-[10px] " + (i === 0 ? "bg-[#3399ff] text-white" : "")}>{r[0]}</div>
                  <div className={"flex w-[99px] shrink-0 items-center border-r border-[#c0c0c0] pl-[2px] " + (i === 0 ? "bg-[#dfeefd]" : "")}>{r[1]}</div>
                </div>
              ))}
            </div>
            <div className="relative mt-[11px] h-[225px] w-[236px] rounded-[3px] border border-[#dbe2e8] pt-[10px] pl-[7px]">
              <span className="absolute top-[-9px] left-[6px] bg-[#f0f0f0] pr-px">大图预览</span>
              <Thumb size={210}><D1 /></Thumb>
            </div>
            <div className="mt-[12px] flex">
              <button className="ml-[64px] flex h-[23px] w-[72px] items-center justify-center rounded-[3px] border-2 border-[#3d9fd9] bg-gradient-to-b from-[#eaf6fd] to-[#bde2f8] text-[12px]">确定</button>
              <button className="ml-[15px] flex h-[23px] w-[72px] items-center justify-center rounded-[3px] border border-[#707070] bg-gradient-to-b from-[#f6f6f6] to-[#cfcfcf] text-[12px]">取消</button>
            </div>
          </div>
        </div>
      </div>

      {/* red annotation rectangles drawn over the screenshot */}
      <Red className="top-[60px] left-[175px] h-[50px] w-[74px]" />
      <Red className="top-[112px] left-[169px] h-[72px] w-[129px]" />
      <Red className="top-[97px] left-[341px] h-[49px] w-[115px]" />
      <Red className="top-[162px] left-[676px] h-[150px] w-[187px]" />
      <Red className="top-[527px] left-[30px] h-[31px] w-[126px]" />
    </div>
  );
}
